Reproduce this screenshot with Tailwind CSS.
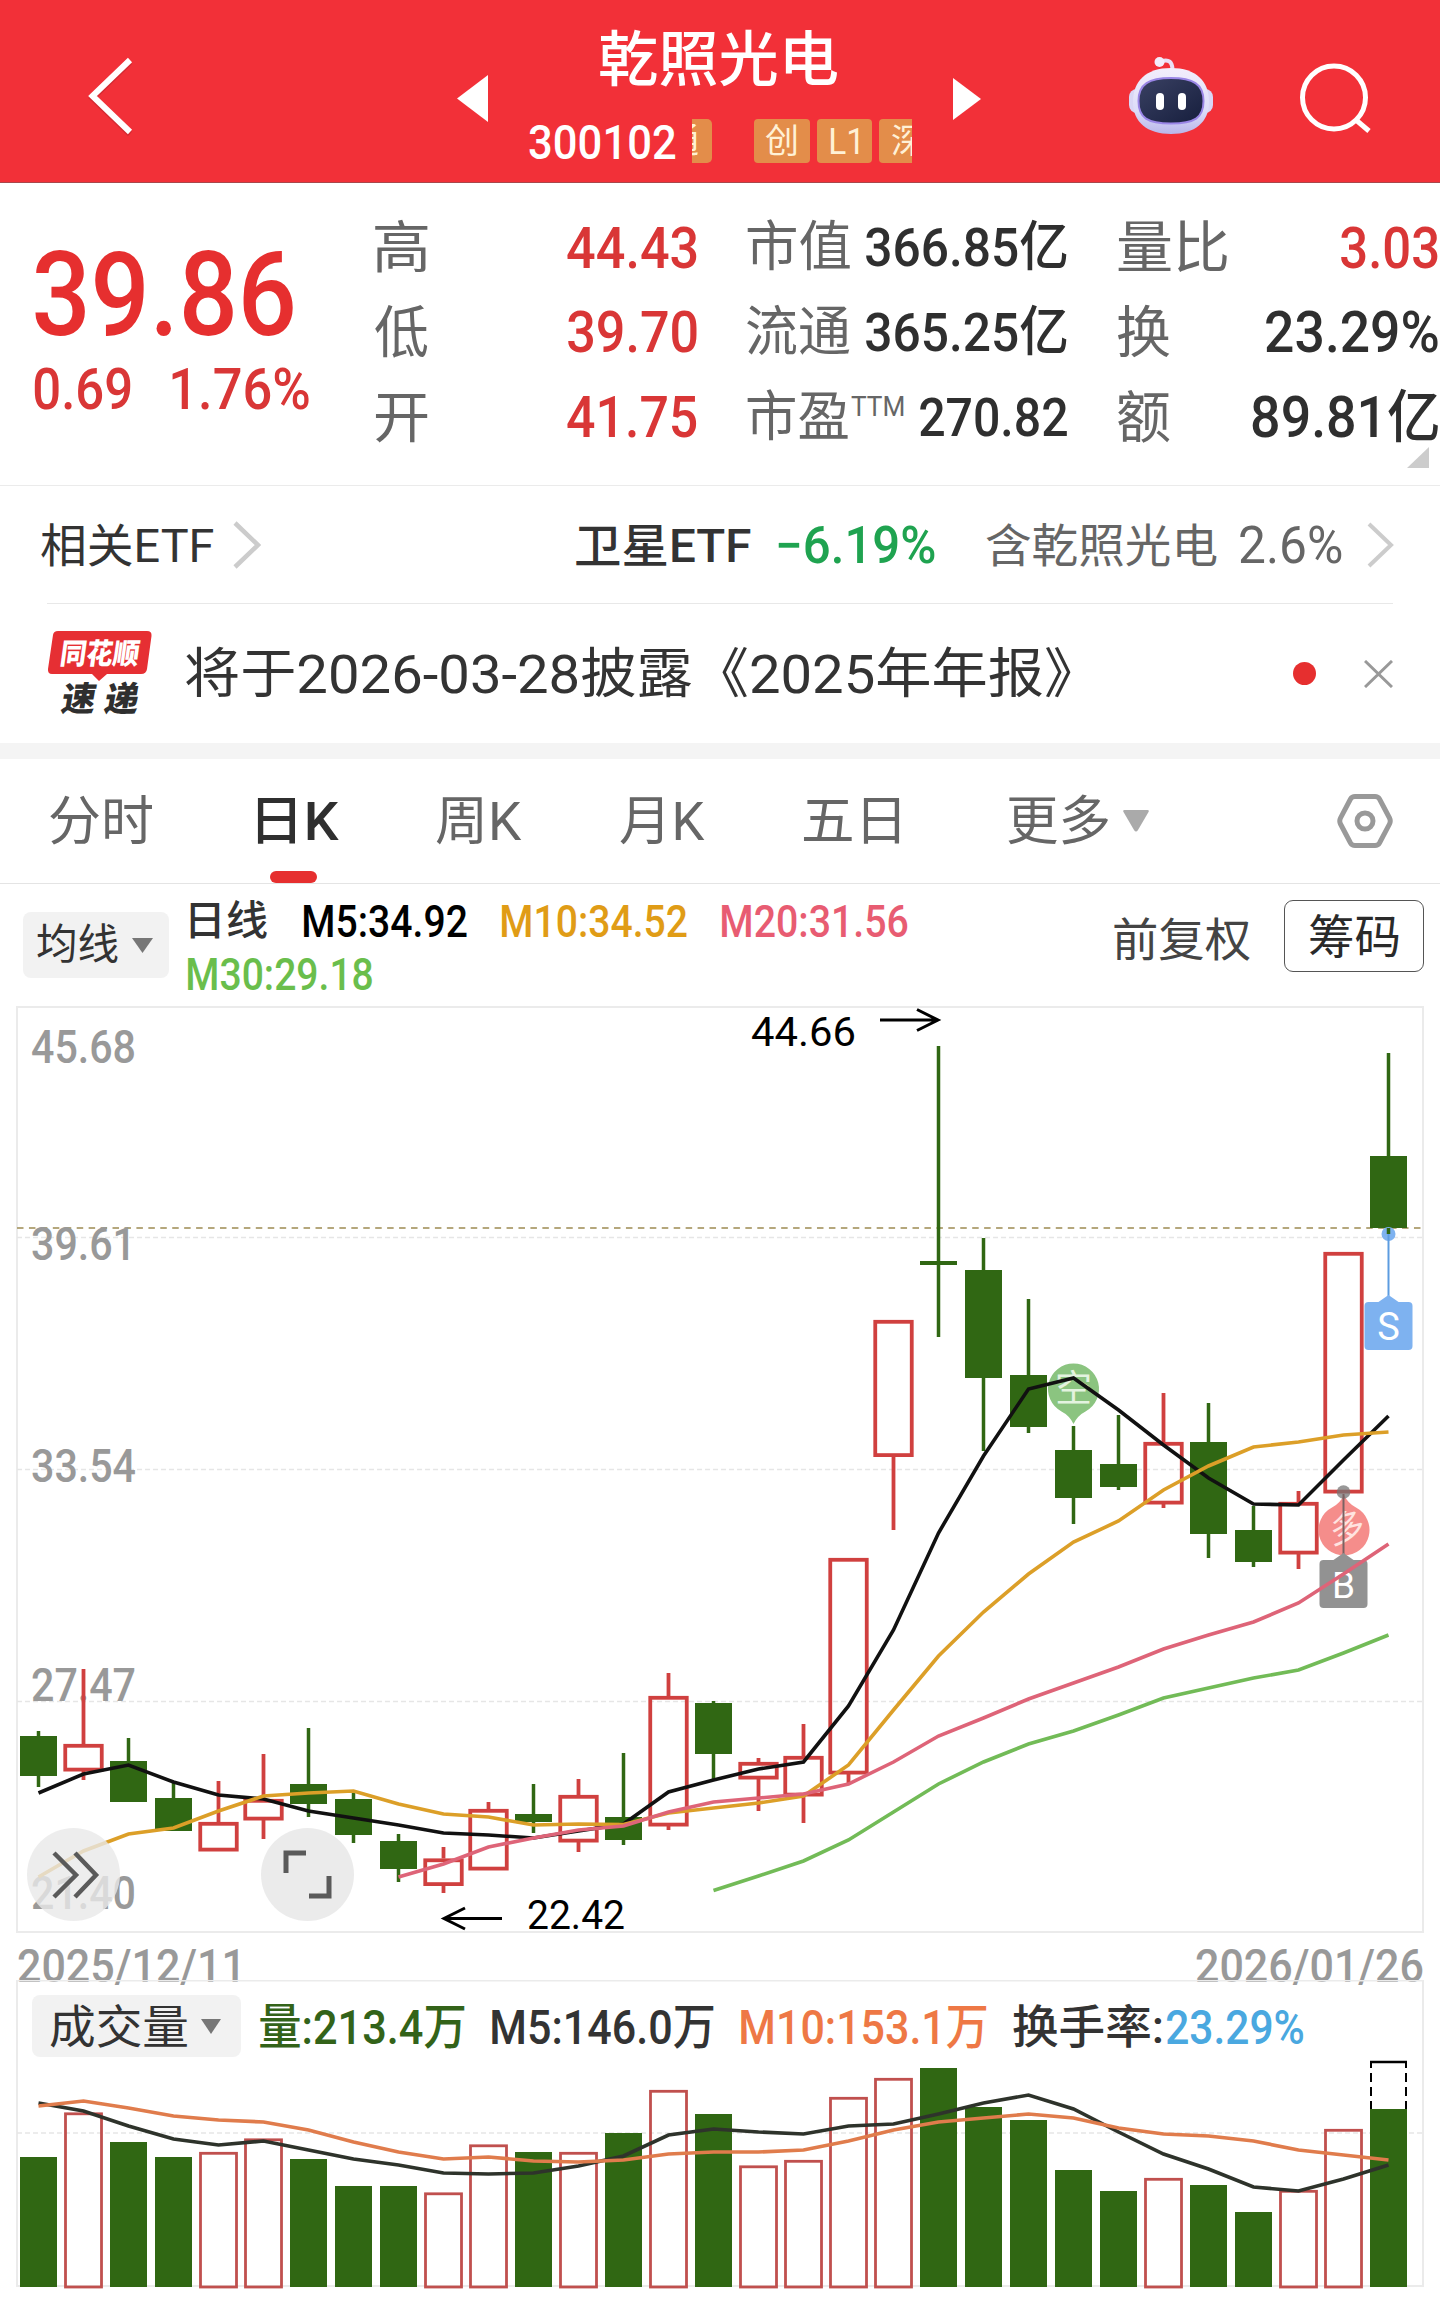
<!DOCTYPE html>
<html lang="zh-CN">
<head>
<meta charset="utf-8">
<title>乾照光电 300102</title>
<script src="https://cdn.jsdelivr.net/npm/@tailwindcss/browser@4"></script>
</head>
<body class="w-[1440px] h-[2297px] overflow-hidden bg-white font-['Roboto','Noto_Sans_CJK_SC',sans-serif] text-[#333] leading-none">

<header class="flex items-start h-[183px] bg-[#f23038] border-b border-[#a8484c] text-white overflow-hidden">
  <svg class="ml-[84px] mt-[54px] w-[52px] h-[84px] shrink-0" viewBox="84 54 52 84" fill="none"><path d="M130 60 92.5 96 130 132" stroke="#a02028" stroke-opacity=".35" stroke-width="6" transform="translate(0 2)"/><path d="M130 60 92.5 96 130 132" stroke="#fff" stroke-width="6"/></svg>
  <svg class="ml-[321px] mt-[75px] w-[31px] h-[47px] shrink-0" viewBox="0 0 31 47"><path d="M31 0v47L0 23.5z" fill="#fff"/></svg>
  <div class="ml-[41px] w-[384px] shrink-0">
    <h1 class="fit ml-[71px] mt-[29px] w-[238px] h-[60px] text-[60px] font-medium"><b>乾照光电</b></h1>
    <div class="flex items-center mt-[30px] h-[44px]">
      <span class="fit w-[146px] text-[49px] font-medium"><b>300102</b></span>
      <span class="ml-[17px] flex justify-end w-[20px] h-[44px] rounded-r-[5px] bg-[#e38d4a] text-[#fff1d6] text-[35px] items-center overflow-hidden pr-[13px]"><span>通</span></span>
      <span class="ml-[42px] flex justify-center items-center w-[56px] h-[44px] rounded-[4px] bg-[#e38d4a] text-[#fff1d6] text-[34px]">创</span>
      <span class="ml-[7px] flex justify-center items-center w-[55px] h-[44px] rounded-[4px] bg-[#e38d4a] text-[#fff1d6]"><span class="fit w-[28px] text-[37px]"><b>L1</b></span></span>
      <span class="ml-[7px] flex items-center w-[33px] h-[44px] rounded-l-[4px] bg-[#e38d4a] text-[#fff1d6] text-[34px] overflow-hidden pl-[12px]"><span>深</span></span>
    </div>
  </div>
  <svg class="ml-[40px] mt-[78px] w-[28px] h-[42px] shrink-0" viewBox="0 0 28 42"><path d="M0 0v42L28 21z" fill="#fff"/></svg>
  <svg class="ml-[144px] mt-[54px] w-[92px] h-[84px] shrink-0" viewBox="1125 54 92 84">
    <defs>
      <linearGradient id="shell" x1="0" y1="0" x2="0" y2="1"><stop offset="0" stop-color="#f3eefc"/><stop offset=".65" stop-color="#dcdcf8"/><stop offset="1" stop-color="#b9b6ea"/></linearGradient>
      <linearGradient id="visor" x1="0" y1="0" x2="1" y2="1"><stop offset="0" stop-color="#3a4163"/><stop offset="1" stop-color="#161e3d"/></linearGradient>
    </defs>
    <path d="M1162 61c7-2 10 1 10.500 8" fill="none" stroke="#eadff5" stroke-width="4"/><circle cx="1159.500" cy="62" r="5" fill="#f3ecfa"/>
    <rect x="1129" y="89" width="84" height="24" rx="8" fill="#d9d6f5"/>
    <path d="M1171 68c25 0 38 13 38 34 0 20-14 32-38 32s-38-12-38-32c0-21 13-34 38-34z" fill="url(#shell)"/>
    <path d="M1171 78c22 0 32.500 6 32.500 23s-9 22.500-32.500 22.500-32.500-5.500-32.500-22.500 10.500-23 32.500-23z" fill="url(#visor)" stroke="#9a86e6" stroke-width="2"/>
    <rect x="1156" y="93" width="8" height="17" rx="4" fill="#fff"/><rect x="1178" y="93" width="8" height="17" rx="4" fill="#fff"/>
  </svg>
  <svg class="ml-[80px] mt-[58px] w-[80px] h-[80px] shrink-0" viewBox="1297 58 80 80" fill="none" stroke="#fff" stroke-width="5"><circle cx="1334" cy="97.500" r="31.500"/><path d="M1356 120 1369 131"/></svg>
</header>

<section class="flex h-[302px]">
  <div class="w-[375px] pl-[35px] text-[#e62f2f] font-medium">
    <div class="fit mt-[51px] w-[258px] h-[117px] text-[117px]"><b>39.86</b></div>
    <div class="flex mt-[9px] text-[57px] text-[#d93636]"><span class="fit -ml-[1px] w-[97px]"><b>0.69</b></span><span class="fit ml-[41px] w-[137px]"><b>1.76%</b></span></div>
  </div>
  <div class="grid grid-rows-3 h-[254px] mt-[22px] w-[322px] text-[57px] font-medium text-[#d93636]">
    <div class="flex items-center justify-between"><span class="fit w-[53px] text-[56px] font-normal text-[#666]"><b>高</b></span><span class="fit w-[130px]"><b>44.43</b></span></div>
    <div class="flex items-center justify-between"><span class="fit w-[53px] text-[56px] font-normal text-[#666]"><b>低</b></span><span class="fit w-[129px]"><b>39.70</b></span></div>
    <div class="flex items-center justify-between"><span class="fit w-[53px] text-[56px] font-normal text-[#666]"><b>开</b></span><span class="fit w-[130px]"><b>41.75</b></span></div>
  </div>
  <div class="grid grid-rows-3 h-[254px] mt-[22px] ml-[50px] w-[320px] text-[54px] font-medium text-[#2f2f2f]">
    <div class="flex items-center justify-between"><span class="fit w-[103px] font-normal text-[#666]"><b>市值</b></span><span class="fit w-[201px]"><b>366.85亿</b></span></div>
    <div class="flex items-center justify-between"><span class="fit w-[103px] font-normal text-[#666]"><b>流通</b></span><span class="fit w-[201px]"><b>365.25亿</b></span></div>
    <div class="flex items-center"><span class="fit w-[101px] font-normal text-[#666]"><b>市盈</b></span><span class="fit ml-[3px] mb-[20px] w-[53px] text-[28px] font-normal text-[#666]"><b>TTM</b></span><span class="fit ml-auto w-[147px]"><b>270.82</b></span></div>
  </div>
  <div class="relative grid grid-rows-3 h-[254px] mt-[22px] ml-[51px] w-[320px] text-[57px] font-medium text-[#2f2f2f]">
    <div class="flex items-center justify-between"><span class="fit w-[109px] text-[56px] font-normal text-[#666]"><b>量比</b></span><span class="fit w-[97px] text-[#d93636]"><b>3.03</b></span></div>
    <div class="flex items-center justify-between"><span class="fit w-[52px] text-[56px] font-normal text-[#666]"><b>换</b></span><span class="fit w-[172px]"><b>23.29%</b></span></div>
    <div class="flex items-center justify-between"><span class="fit w-[52px] text-[56px] font-normal text-[#666]"><b>额</b></span><span class="fit w-[186px]"><b>89.81亿</b></span></div>
    <svg class="absolute right-[9px] -bottom-[9px] w-[22px] h-[21px]" viewBox="0 0 22 21"><path d="M22 0v21H0z" fill="#ccc"/></svg>
  </div>
</section>

<section class="flex items-center h-[118px] border-t border-[#ebebeb] text-[46px] pl-[41px]">
  <span class="fit w-[173px]"><b>相关ETF</b></span>
  <svg class="ml-[19px] w-[30px] h-[50px]" viewBox="0 0 30 50" fill="none" stroke="#ccc" stroke-width="4.500"><path d="M2 3 25 25 2 47"/></svg>
  <span class="fit ml-[313px] w-[175px] font-medium"><b>卫星ETF</b></span>
  <span class="fit ml-[27px] w-[157px] text-[51px] text-[#1fa350] font-medium"><b>−6.19%</b></span>
  <span class="fit ml-[51px] w-[231px] text-[#666]"><b>含乾照光电</b></span>
  <span class="fit ml-[23px] w-[102px] text-[51px] text-[#666]"><b>2.6%</b></span>
  <svg class="ml-[25px] w-[28px] h-[46px]" viewBox="0 0 28 46" fill="none" stroke="#ccc" stroke-width="4"><path d="M2 2 24 23 2 44"/></svg>
</section>

<section class="flex items-center h-[140px]">
  <div class="self-stretch flex items-center w-[1346px] ml-[47px] border-t border-[#e8e8e8]">
    <svg class="w-[106px] h-[90px] shrink-0" viewBox="47 629 106 90" font-family="'Noto Sans CJK SC',sans-serif" font-weight="900">
      <path d="M58 631h89q5 0 4.500 5l-4.500 33q-.7 5-6 5h-34l-8 7-7-7H52q-4.500 0-4-5l5-34q.6-4 5-4z" fill="#e62f33"/>
      <text transform="translate(59 663.5) skewX(-8)" font-size="29" textLength="79" lengthAdjust="spacingAndGlyphs" fill="#fff">同花顺</text>
      <text transform="translate(60 711) skewX(-10)" font-size="34" textLength="77" lengthAdjust="spacing" fill="#2f2f2f">速递</text>
    </svg>
    <span class="fit ml-[33px] w-[885px] text-[54px]"><b>将于2026-03-28披露《2025年年报》</b></span>
    <span class="ml-auto w-[23px] h-[23px] rounded-full bg-[#e62f2f]"></span>
    <svg class="ml-[48px] w-[29px] h-[28px]" viewBox="0 0 29 28" stroke="#999" stroke-width="3"><path d="M1 1 28 27M28 1 1 27"/></svg>
  </div>
</section>

<div class="h-[16px] bg-[#f4f4f4]"></div>

<nav class="flex items-center h-[125px] border-b border-[#e4e4e4] pl-[50px] text-[53px] text-[#666]">
  <span class="fit w-[102px]"><b>分时</b></span>
  <span class="relative self-stretch flex items-center ml-[105px] text-[#2f2f2f] font-medium"><span class="fit w-[82px]"><b>日K</b></span><i class="absolute left-[13px] bottom-0 w-[47px] h-[12px] rounded-full bg-[#e62f2f]"></i></span>
  <span class="fit ml-[97px] w-[86px]"><b>周K</b></span>
  <span class="fit ml-[98px] w-[85px]"><b>月K</b></span>
  <span class="fit ml-[98px] w-[97px]"><b>五日</b></span>
  <span class="fit ml-[108px] w-[101px]"><b>更多</b></span>
  <svg class="ml-[14px] w-[26px] h-[22px]" viewBox="0 0 26 22"><path d="M1.500 0h23q2 0 1 2L15 20q-2 3-4 0L.5 2q-1-2 1-2z" fill="#aaa"/></svg>
  <svg class="ml-[188px] w-[56px] h-[54px]" viewBox="0 0 56 54" fill="none" stroke="#999" stroke-width="5"><path d="M18 2.500h20q3 0 4.500 2.500l10 19q1.500 3 0 6l-10 19q-1.500 2.500-4.500 2.500H18q-3 0-4.500-2.500l-10-19q-1.500-3 0-6l10-19Q15 2.500 18 2.500z"/><circle cx="28" cy="27" r="8"/></svg>
</nav>

<section class="flex h-[122px]">
  <button class="flex items-center ml-[23px] mt-[28px] w-[146px] h-[66px] rounded-[8px] bg-[#f2f2f2] pl-[14px]"><span class="fit w-[81px] text-[42px]"><b>均线</b></span><svg class="ml-[14px] w-[21px] h-[15px]" viewBox="0 0 21 15"><path d="M0 0h21L10.500 15z" fill="#777"/></svg></button>
  <div class="ml-[17px] mt-[11px] w-[928px] font-medium text-[44px]">
    <div class="flex items-center h-[53px]"><span class="fit ml-[4px] w-[77px] text-[41px]"><b>日线</b></span><span class="fit ml-[37px] w-[163px] text-black"><b>M5:34.92</b></span><span class="fit ml-[35px] w-[185px] text-[#e09c16]"><b>M10:34.52</b></span><span class="fit ml-[35px] w-[186px] text-[#e85c72]"><b>M20:31.56</b></span></div>
    <div class="flex items-center h-[53px] text-[#6abe4c]"><span class="fit ml-[2px] w-[184px]"><b>M30:29.18</b></span></div>
  </div>
  <div class="flex items-start text-[46px]"><span class="fit mt-[32px] w-[136px] text-[#444]"><b>前复权</b></span><button class="flex items-center justify-center ml-[34px] mt-[16px] w-[140px] h-[72px] rounded-[9px] border-[1.500px] border-[#555] text-[#2a2a2a]"><span class="fit w-[90px]"><b>筹码</b></span></button></div>
</section>

<svg id="kline" class="block w-[1440px] h-[974px]" viewBox="0 1006 1440 974" font-family="Roboto,'Noto Sans CJK SC',sans-serif"></svg>

<section class="relative h-[317px]">
  <svg id="volume" class="absolute inset-0 w-[1440px] h-[317px]" viewBox="0 1980 1440 317"></svg>
  <div class="relative flex items-center pt-[15px] pl-[32px] font-medium text-[49px]">
    <button class="flex items-center w-[209px] h-[62px] rounded-[8px] bg-[#f2f2f2] pl-[18px]"><span class="fit w-[137px] text-[46px] font-normal"><b>成交量</b></span><svg class="ml-[14px] w-[20px] h-[15px]" viewBox="0 0 20 15"><path d="M0 0h20L10 15z" fill="#777"/></svg></button>
    <span class="fit ml-[19px] w-[205px] text-[#336319]"><b>量:213.4万</b></span>
    <span class="fit ml-[27px] w-[222px]"><b>M5:146.0万</b></span>
    <span class="fit ml-[27px] w-[246px] text-[#ee7845]"><b>M10:153.1万</b></span>
    <span class="fit ml-[26px] w-[149px] text-[46px]"><b>换手率:</b></span>
    <span class="fit ml-[4px] w-[137px] text-[#4aa8e0]"><b>23.29%</b></span>
  </div>
</section>

<script>
// Condense each label so that its glyphs fill the box around it
const ctx = document.createElement('canvas').getContext('2d');
function fitLabels() {
  document.querySelectorAll('.fit').forEach(box => {
    const t = box.firstElementChild, cs = getComputedStyle(box), size = parseFloat(cs.fontSize);
    box.style.whiteSpace = 'nowrap';
    box.style.flexShrink = 0;
    t.style.display = 'block';
    t.style.fontWeight = 'inherit';
    t.style.width = 'max-content';
    t.style.marginRight = '-1000px';
    t.style.transformOrigin = '0 50%';
    ctx.font = cs.fontWeight + ' ' + cs.fontSize + ' ' + cs.fontFamily;
    const m = ctx.measureText(t.textContent);
    const s = parseFloat(cs.width) / (m.actualBoundingBoxRight + m.actualBoundingBoxLeft);
    t.style.transform = `translate(${m.actualBoundingBoxLeft * s}px, ${size > 45 ? size * 0.025 : 0}px) scaleX(${s})`;
  });
}
fitLabels();
addEventListener('load', fitLabels);
const watch = new ResizeObserver(fitLabels);
document.querySelectorAll('.fit').forEach(el => watch.observe(el));

const X = i => 38.5 + 45 * i, RED = '#d0403f', GREEN = '#306713';
// up?, high, low, body top, body bottom, volume top
const bars = [
  [0,1731,1787,1736,1776,2157],[1,1669,1780,1744,1771,2112.500],[0,1738,1802,1761,1802,2142],[0,1783,1831,1798,1831,2157],
  [1,1781,1851,1822,1851,2152],[1,1754,1839,1799,1820,2138.500],[0,1728,1817,1784,1804,2159],[0,1793,1843,1799,1835,2186],
  [0,1834,1882,1841,1869,2186],[1,1847,1893,1858.500,1885.500,2192.500],[1,1802,1870,1809,1870,2144.500],[0,1784,1833,1814,1822,2152],
  [1,1779,1852,1795,1842,2152],[0,1753,1845,1817,1840,2133],[1,1673,1830,1696,1826,2090],[0,1701,1779,1703,1754,2114],
  [1,1758,1811,1762,1779,2165.500],[1,1724,1823,1756,1796,2160],[1,1558,1784,1558,1774,2097],[1,1320,1530,1320,1456.500,2078],
  [0,1046,1337,1261,1265,2068],[0,1238,1451,1270,1378,2107],[0,1299,1433,1375,1427,2120],[0,1426,1524,1450,1498,2170],
  [0,1415,1490,1464,1487,2191],[1,1393,1508,1442,1504,2178],[0,1403,1558,1442,1534,2185],[0,1506,1567,1530,1562,2212],
  [1,1491,1569,1502,1554,2190],[1,1252,1493,1252,1493,2129],[0,1053,1234,1156,1228,2109]];
const ma5 = [1793,1774,1765,1782,1795,1799,1811,1818,1825,1833,1835,1838,1831,1824,1792,1780,1769,1762,1706,1630,1533,1456,1389,1378,1410,1445,1478,1504,1505,1460,1416];
const ma10 = [1877,1851,1834,1828,1811,1796,1793,1791,1804,1814,1817,1825,1824,1824.500,1813,1808,1803,1796,1765,1710,1656,1612,1574,1542,1521,1490,1466,1447,1442,1435,1432];
const ma20 = [1877,1864,1847,1838,1830,1826,1812,1802,1798,1794,1784,1762,1736,1718,1699,1683,1667,1649,1635,1622,1603,1574,1544];
const ma30 = [1890.500,1876,1861,1840,1812,1784,1762,1744,1731,1715,1698,1688,1678,1670,1653,1635];
const v5 = [2103,2111,2126,2139,2145,2141,2150,2159,2165,2173,2174,2173,2166,2156,2135,2129,2132,2134,2126,2124,2114,2103,2095,2109,2132,2154,2169,2187,2191,2179,2165];
const v10 = [2106,2101,2108,2116,2120,2122,2130,2142,2152,2159,2157,2161,2162,2160,2154,2152,2152,2150,2141,2130,2122,2118,2114,2118,2128,2134,2136,2141,2150,2155,2160];
const line = (a, from, c, w = 3.6) => `<polyline points="${a.map((y, i) => X(from + i) + ',' + y).join(' ')}" fill="none" stroke="${c}" stroke-width="${w}"/>`;
const seg = (x1, y1, x2, y2, c, w, d = '') => `<line x1="${x1}" y1="${y1}" x2="${x2}" y2="${y2}" stroke="${c}" stroke-width="${w}" stroke-dasharray="${d}"/>`;
const txt = (s, x, y, size, len, c, extra = '') => `<text x="${x}" y="${y}" font-size="${size}" textLength="${len}" lengthAdjust="spacingAndGlyphs" fill="${c}" ${extra}>${s}</text>`;

let k = `<rect x="17" y="1007" width="1406" height="925" fill="none" stroke="#ebebeb" stroke-width="2"/>`;
[1237.5, 1469.5, 1701.500].forEach(y => k += seg(17, y, 1423, y, '#e6e6e6', 1.5, '5 3'));
k += seg(17, 1228, 1423, 1228, '#b5a77c', 1.8, '6.500 5.440');
[['45.68',1063],['39.61',1260],['33.54',1482],['27.47',1701],['21.40',1909]].forEach(([s, y]) => k += txt(s, 31, y, 47, 105, '#999', 'font-weight="500"'));
bars.forEach(([up, hi, lo, top, bot], i) => {
  const x = X(i);
  if (up) {
    if (hi < top) k += seg(x, hi, x, top, RED, 3.8);
    if (lo > bot) k += seg(x, bot, x, lo, RED, 3.8);
    k += `<rect x="${x - 18.250}" y="${top + 1.8}" width="36.500" height="${bot - top - 3.2}" fill="none" stroke="${RED}" stroke-width="3.800"/>`;
  } else {
    k += seg(x, hi, x, lo, GREEN, 3.5) + `<rect x="${x - 18.500}" y="${top}" width="37" height="${bot - top}" fill="${GREEN}"/>`;
  }
});
// Bearish and bullish balloons
k += `<path d="M1073.500 1363.500a25.500 25.500 0 0 1 12 48q-8 4-12 12.500-4-8.500-12-12.500a25.500 25.500 0 0 1 12-48z" fill="#8bc480"/>${txt('空', 1055, 1402, 37, 37, '#e3f3df')}`;
k += `<path d="M1344 1555.500a25.500 25.500 0 0 1-12-48q8-4 12-12.500 4 8.500 12 12.500a25.500 25.500 0 0 1-12 48z" fill="#f58d8b"/><text font-size="35" fill="#ffe3e0" transform="translate(1328 1541) rotate(-14 16 -13) skewX(-8)">多</text>`;
k += `<circle cx="1343.500" cy="1492" r="6.800" fill="#757575" fill-opacity=".75"/>${seg(1343.5, 1494, 1343.5, 1556, '#7a6262', 2)}<path d="M1332 1561 1343.500 1553 1355 1561z" fill="#929292"/><rect x="1319.500" y="1560" width="48" height="48" rx="4" fill="#929292"/><text x="1343.500" y="1598" text-anchor="middle" font-size="37" fill="#fff">B</text>`;
k += line(ma5, 0, '#111') + line(ma10, 0, '#dc9f28') + line(ma20, 8, '#de6478') + line(ma30, 15, '#72bb57');
k += `<circle cx="1388.500" cy="1234" r="7" fill="#7eb2f0"/>${seg(1388.5, 1228, 1388.5, 1234, GREEN, 3.5)}${seg(1388.5, 1234, 1388.5, 1298, '#5c9ce0', 2)}<path d="M1377 1303 1388.500 1295 1400 1303z" fill="#7eb2f0"/><rect x="1364.500" y="1302" width="48" height="48" rx="4" fill="#7eb2f0"/><text x="1388.500" y="1340" text-anchor="middle" font-size="38" fill="#fff">S</text>`;
k += txt('44.66', 751, 1046, 40, 105, '#000') + `<path d="M880 1020h58M917 1009.500 938 1020 917 1030.500" fill="none" stroke="#000" stroke-width="3"/>`;
k += txt('22.42', 527, 1929, 40, 98, '#000') + `<path d="M502 1918.500h-58M465 1908 444 1918.500 465 1929" fill="none" stroke="#000" stroke-width="3"/>`;
k += `<circle cx="73.500" cy="1874.500" r="46.500" fill="#e8e8e8" fill-opacity=".8"/><path d="M54 1853 76 1875 54 1897M75 1853 96 1875 75 1897" fill="none" stroke="#5a5a5a" stroke-width="4.500"/>`;
k += `<circle cx="307.500" cy="1874.500" r="46.500" fill="#e8e8e8" fill-opacity=".85"/><path d="M286 1873v-20h20M309 1896h20v-20" fill="none" stroke="#5a5a5a" stroke-width="5"/>`;
k += txt('2025/12/11', 17, 1982, 47, 229, '#999', 'font-weight="500"') + txt('2026/01/26', 1195, 1982, 47, 229, '#999', 'font-weight="500"');
const kline = document.getElementById('kline');
kline.style.overflow = 'visible';
kline.innerHTML = k;

let v = `<rect x="17" y="1980.500" width="1406" height="305.500" fill="none" stroke="#ebebeb" stroke-width="2"/>` + seg(17, 2133, 1423, 2133, '#e6e6e6', 1.5, '5 3');
bars.forEach(([up, , , , , top], i) => {
  const x = X(i);
  v += up ? `<rect x="${x - 18}" y="${top + 1.3}" width="36" height="${2285.7 - top}" fill="none" stroke="#c0504e" stroke-width="2.800"/>`
          : `<rect x="${x - 18.500}" y="${top}" width="37" height="${2287 - top}" fill="${GREEN}"/>`;
});
v += `<path d="M1370 2062h37" stroke="#000" stroke-width="2.500"/><path d="M1371 2062v47M1406 2062v47" stroke="#000" stroke-width="2" stroke-dasharray="9 5" stroke-dashoffset="3"/>`;
v += line(v5, 0, '#2e332b') + line(v10, 0, '#e07c4c');
document.getElementById('volume').innerHTML = v;
</script>
</body>
</html>
